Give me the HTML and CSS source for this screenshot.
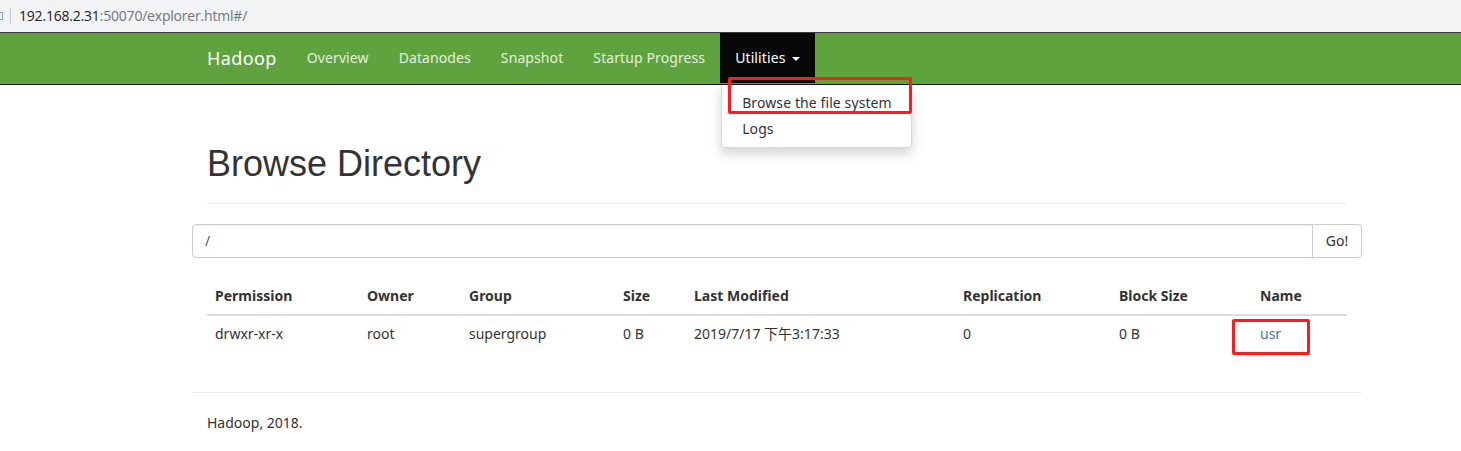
FILE: index.html
```html
<!DOCTYPE html>
<html lang="en">
<head>
<meta charset="utf-8">
<title>Browsing HDFS</title>
<link rel="stylesheet" href="styles.css">
</head>
<body>
<div class="addrbar">
  <span class="addr-icon"></span>
  <span class="addr-sep"></span>
  <span class="addr-host">192.168.2.31</span><span class="addr-path">:50070/explorer.html#/</span>
</div>

<header class="navbar">
  <div class="nav-inner">
    <a class="brand">Hadoop</a>
    <ul class="nav">
      <li><a>Overview</a></li>
      <li><a>Datanodes</a></li>
      <li><a>Snapshot</a></li>
      <li><a>Startup Progress</a></li>
      <li class="dropdown open">
        <a class="dropdown-toggle">Utilities <span class="caret"></span></a>
        <ul class="dropdown-menu">
          <li><a>Browse the file system</a></li>
          <li><a>Logs</a></li>
        </ul>
        <span class="mark mark-menu"></span>
      </li>
    </ul>
  </div>
</header>

<main class="container">
  <div class="row">
    <div class="page-header">
      <h1>Browse Directory</h1>
    </div>
  </div>

  <div class="input-group">
    <input class="form-control" type="text" value="/">
    <button class="btn" type="button">Go!</button>
  </div>

  <div class="row">
    <table class="table">
      <colgroup>
        <col class="c-perm"><col class="c-owner"><col class="c-group"><col class="c-size">
        <col class="c-mod"><col class="c-rep"><col class="c-block"><col class="c-name">
      </colgroup>
      <thead>
        <tr>
          <th>Permission</th><th>Owner</th><th>Group</th><th>Size</th>
          <th>Last Modified</th><th>Replication</th><th>Block Size</th><th>Name</th>
        </tr>
      </thead>
      <tbody>
        <tr>
          <td>drwxr-xr-x</td><td>root</td><td>supergroup</td><td>0 B</td>
          <td>2019/7/17 下午3:17:33</td><td>0</td><td>0 B</td>
          <td class="name-cell"><a class="link">usr</a><span class="mark mark-usr"></span></td>
        </tr>
      </tbody>
    </table>
  </div>

  <hr class="footer-rule">
  <div class="row">
    <p class="footer">Hadoop, 2018.</p>
  </div>
</main>
</body>
</html>
```

FILE: styles.css
```css
* { box-sizing: border-box; }

html, body {
  margin: 0;
  padding: 0;
  background: #fff;
}

body {
  font-family: "Noto Sans", "Noto Sans CJK SC", sans-serif;
  font-size: 14px;
  line-height: 20px;
  color: #333;
  width: 1461px;
  overflow: hidden;
}

/* browser address bar */
.addrbar {
  height: 32px;
  background: #f2f3f4;
  display: flex;
  align-items: center;
  font-family: "Open Sans", "Noto Sans", sans-serif;
  font-size: 14px;
  letter-spacing: -0.2px;
}
.addr-icon {
  width: 3px;
  height: 8px;
  border: 1px solid #8aa0c8;
  border-left: 0;
  margin-right: 7px;
}
.addr-sep {
  width: 1px;
  height: 16px;
  background: #c4c7ca;
  margin-right: 8px;
}
.addr-host { color: #202124; }
.addr-path { color: #70757a; }

/* navbar */
.navbar {
  background: #5fa33e;
  border-top: 1px solid #3b3b3b;
  border-bottom: 1px solid #1a1a1a;
  height: 53px;
}
.nav-inner {
  margin-left: 192px;
  display: flex;
  align-items: stretch;
  height: 51px;
}
.brand {
  padding: 15px 15px;
  font-size: 18px;
  line-height: 20px;
  color: #fff;
  font-family: "Noto Sans", sans-serif;
  letter-spacing: 0.4px;
}
.nav {
  list-style: none;
  margin: 0;
  padding: 0;
  display: flex;
}
.nav > li { position: relative; }
.nav > li > a {
  display: block;
  padding: 15px 15px;
  color: #e4efdf;
  letter-spacing: 0.1px;
}
.nav > li.open > a {
  background: #080808;
  color: #fff;
}
.caret {
  display: inline-block;
  width: 0;
  height: 0;
  margin-left: 3px;
  vertical-align: middle;
  border-top: 4px solid #fff;
  border-left: 4px solid transparent;
  border-right: 4px solid transparent;
}
.dropdown-menu {
  position: absolute;
  top: 52px;
  left: 1px;
  z-index: 10;
  list-style: none;
  margin: 0;
  padding: 5px 0;
  width: 191px;
  background: #fff;
  border: 1px solid rgba(0, 0, 0, 0.15);
  border-top: 0;
  border-radius: 0 0 4px 4px;
  box-shadow: 0 6px 12px rgba(0, 0, 0, 0.175);
}
.dropdown-menu a {
  display: block;
  padding: 3px 20px;
  color: #333;
  white-space: nowrap;
  letter-spacing: 0.1px;
}

/* red annotation boxes */
.mark {
  position: absolute;
  border: 3px solid #fb1d1d;
  border-radius: 2px;
  pointer-events: none;
  z-index: 20;
}
.mark-menu {
  left: 8px;
  top: 44px;
  width: 184px;
  height: 37px;
}
.mark-usr {
  left: -20px;
  top: 3px;
  width: 78px;
  height: 36px;
}

/* content */
.container {
  margin-left: 192px;
  width: 1170px;
}
.row { padding: 0 15px; }

.page-header {
  margin: 59px 0 20px;
  padding-bottom: 9px;
  border-bottom: 1px solid #eee;
}
.page-header h1 {
  margin: 0 0 10px;
  font-family: "Liberation Sans", Arial, sans-serif;
  font-weight: 400;
  font-size: 36px;
  line-height: 39.6px;
  color: #333;
}

.input-group {
  display: flex;
  height: 34px;
  margin-top: 20px;
}
.form-control {
  flex: 1;
  height: 34px;
  padding: 6px 12px;
  font: inherit;
  color: #555;
  border: 1px solid #ccc;
  border-radius: 4px 0 0 4px;
  box-shadow: inset 0 1px 1px rgba(0, 0, 0, 0.075);
  outline: none;
}
.btn {
  width: 50px;
  height: 34px;
  margin-left: -1px;
  padding: 6px 12px;
  font: inherit;
  color: #333;
  background: #fff;
  border: 1px solid #ccc;
  border-radius: 0 4px 4px 0;
}

.table {
  width: 100%;
  table-layout: fixed;
  border-collapse: collapse;
  margin: 20px 0 20px;
}
.c-perm { width: 152px; }
.c-owner { width: 102px; }
.c-group { width: 154px; }
.c-size { width: 71px; }
.c-mod { width: 269px; }
.c-rep { width: 156px; }
.c-block { width: 141px; }
.c-name { width: 95px; }

.table th,
.table td {
  padding: 8px;
  text-align: left;
  white-space: nowrap;
  line-height: 20px;
}
.table th {
  font-weight: 700;
  border-bottom: 2px solid #ddd;
}
.name-cell { position: relative; }
.link { color: #3d77bf; }

.footer-rule {
  margin: 40px 0 20px;
  border: 0;
  border-top: 1px solid #eee;
}
.footer {
  margin: 0;
}
```
